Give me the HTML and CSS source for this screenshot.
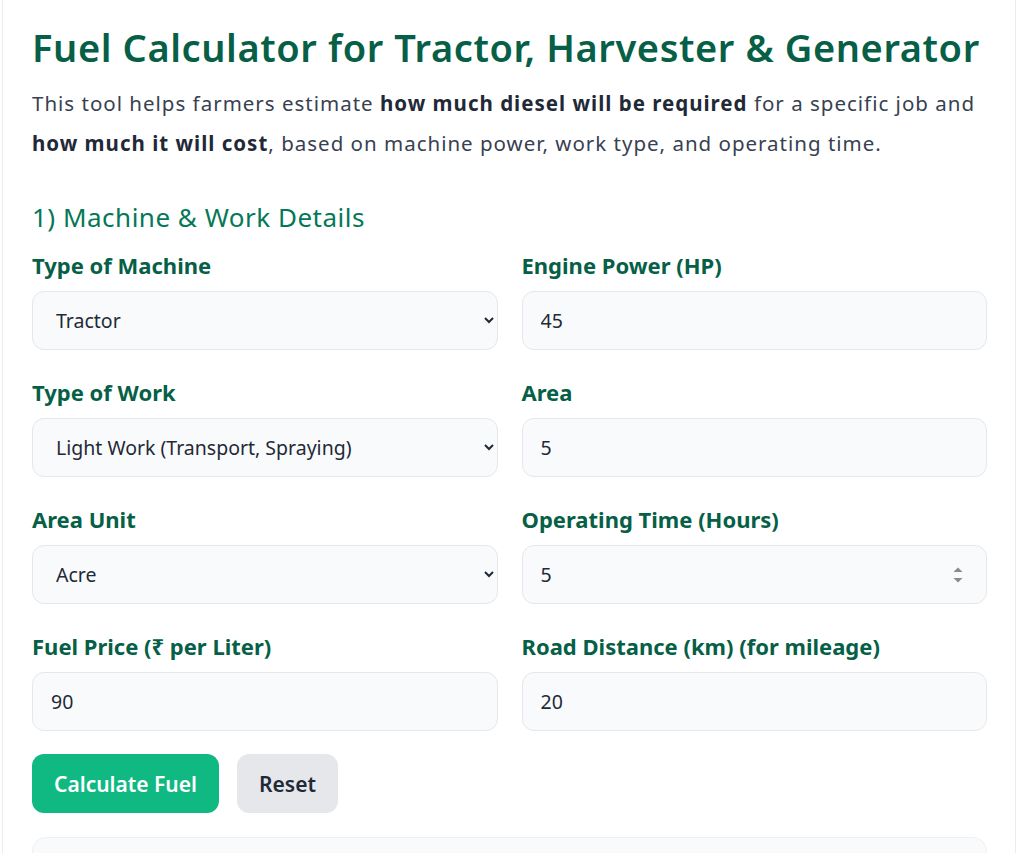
FILE: index.html
```html
<!DOCTYPE html>
<html lang="en">
<head>
<meta charset="utf-8">
<title>Fuel Calculator</title>
<link rel="stylesheet" href="styles.css">
</head>
<body>
<div class="card">
  <h1 class="title">Fuel Calculator for Tractor, Harvester &amp; Generator</h1>
  <p class="intro">This tool helps farmers estimate <strong>how much diesel will be required</strong> for a specific job and <strong>how much it will cost</strong>, based on machine power, work type, and operating time.</p>

  <h2 class="section">1) Machine &amp; Work Details</h2>

  <div class="grid">
    <div class="field">
      <label class="label">Type of Machine</label>
      <select class="control">
        <option>Tractor</option>
        <option>Harvester</option>
        <option>Generator</option>
      </select>
    </div>
    <div class="field">
      <label class="label">Engine Power (HP)</label>
      <input class="control" type="text" value="45">
    </div>
    <div class="field">
      <label class="label">Type of Work</label>
      <select class="control">
        <option>Light Work (Transport, Spraying)</option>
      </select>
    </div>
    <div class="field">
      <label class="label">Area</label>
      <input class="control" type="text" value="5">
    </div>
    <div class="field">
      <label class="label">Area Unit</label>
      <select class="control">
        <option>Acre</option>
        <option>Hectare</option>
      </select>
    </div>
    <div class="field">
      <label class="label">Operating Time (Hours)</label>
      <div class="spin-wrap">
        <input class="control" type="text" value="5">
        <svg class="spinner" width="14" height="24" viewBox="0 0 14 24">
          <rect x="0" y="0" width="14" height="24" fill="#f9fafb"/>
          <path d="M2.5 9 L7 4.5 L11.5 9 Z" fill="#8a8a8a"/>
          <path d="M2.5 15 L7 19.5 L11.5 15 Z" fill="#8a8a8a"/>
        </svg>
      </div>
    </div>
    <div class="field">
      <label class="label">Fuel Price (₹ per Liter)</label>
      <input class="control" type="text" value="90">
    </div>
    <div class="field">
      <label class="label">Road Distance (km) (for mileage)</label>
      <input class="control" type="text" value="20">
    </div>
  </div>

  <div class="actions">
    <button class="btn btn-primary">Calculate Fuel</button>
    <button class="btn btn-secondary">Reset</button>
  </div>

  <div class="result"></div>
</div>
</body>
</html>
```

FILE: styles.css
```css
* { box-sizing: border-box; }

html, body {
  margin: 0;
  padding: 0;
  background: #ffffff;
  font-family: "Noto Sans", "Open Sans", sans-serif;
  overflow: hidden;
}

.card {
  margin-left: 2px;
  width: 1014px;
  min-height: 900px;
  border-left: 1px solid #ececec;
  border-right: 1px solid #ececec;
  padding: 21px 28px 0 29px;
}

.title {
  margin: 0;
  font-size: 38px;
  font-weight: 600;
  color: #065f46;
  line-height: 52px;
  letter-spacing: 0.6px;
  white-space: nowrap;
}

.intro {
  margin: 10px 0 0;
  font-size: 20.5px;
  line-height: 40px;
  letter-spacing: 1px;
  color: #374151;
}

.intro strong {
  color: #1f2937;
  font-weight: 700;
}

.section {
  margin: 36px 0 0;
  font-size: 26px;
  font-weight: 400;
  color: #047857;
  line-height: 36px;
  letter-spacing: 0.5px;
}

.grid {
  margin-top: 15px;
  display: grid;
  grid-template-columns: 1fr 1fr;
  column-gap: 24px;
  row-gap: 27px;
}

.field {
  display: flex;
  flex-direction: column;
  gap: 11px;
}

.label {
  font-size: 22px;
  font-weight: 700;
  color: #065f46;
  line-height: 30px;
}

.control {
  width: 100%;
  height: 59px;
  border: 1.5px solid #e5e7eb;
  border-radius: 12px;
  background-color: #f9fafb;
  font-family: inherit;
  font-size: 19.5px;
  color: #1f2937;
  padding: 0 18px;
  outline: none;
}

select.control {
  padding: 0 15px 0 19px;
}

.spin-wrap {
  position: relative;
}

.spinner {
  position: absolute;
  right: 22px;
  top: 18px;
}

.actions {
  display: flex;
  gap: 18px;
  margin-top: 23px;
}

.btn {
  height: 59px;
  border: none;
  border-radius: 12px;
  font-family: inherit;
  font-size: 21px;
  font-weight: 600;
  padding: 0 22px;
  cursor: pointer;
}

.btn-primary {
  background: #10b981;
  color: #ffffff;
}

.btn-secondary {
  background: #e5e7eb;
  color: #1f2937;
}

.result {
  margin-top: 24px;
  height: 80px;
  border: 1.5px solid #eef0f2;
  border-radius: 14px;
  background: #f9fafb;
}
```
